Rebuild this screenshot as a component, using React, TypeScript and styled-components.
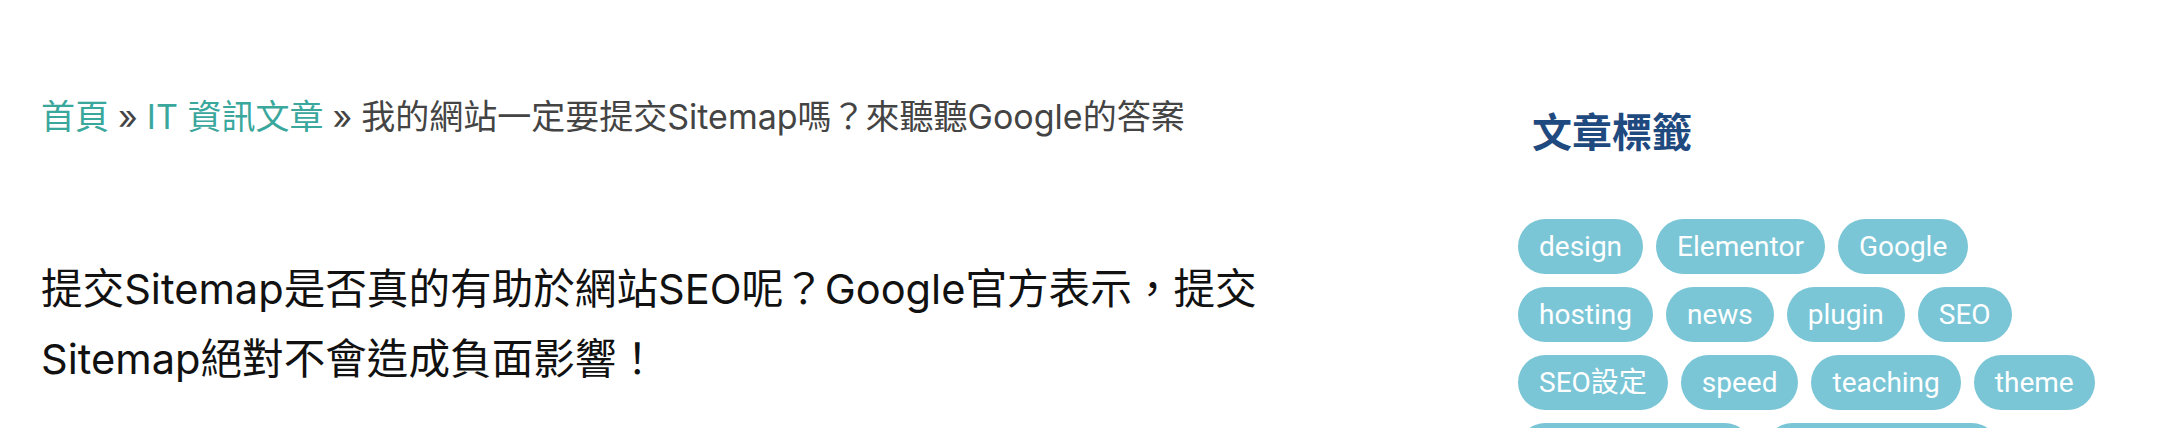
import styled, { createGlobalStyle } from 'styled-components'

const GlobalStyle = createGlobalStyle`
  html, body {
    margin: 0;
    padding: 0;
    background: #ffffff;
  }

  body {
    font-family: Inter, "Noto Sans CJK TC", sans-serif;
    overflow: hidden;
  }
`

const Page = styled.div`
  display: flex;
  align-items: flex-start;
  width: 2160px;
  height: 428px;
  overflow: hidden;
`

const Main = styled.main`
  box-sizing: border-box;
  flex: 0 0 1301px;
  padding: 93px 0 0 41px;
`

const Breadcrumb = styled.nav`
  color: #444444;
  font-size: 34px;
  line-height: 48px;
  white-space: nowrap;
`

const Crumb = styled.a`
  color: #3aa79d;
  text-decoration: none;
`

const Separator = styled.span`
  color: #444444;
  margin: 0 9px;
`

const Lead = styled.p`
  color: #111111;
  font-size: 41.6px;
  line-height: 70px;
  margin: 113px 0 0;
`

const Sidebar = styled.aside`
  box-sizing: border-box;
  flex: 0 0 596px;
  margin-left: 217px;
  padding-top: 109px;
`

const WidgetTitle = styled.h3`
  color: #1f4a80;
  font-size: 40px;
  font-weight: 700;
  line-height: 48px;
  margin: 0 0 62px;
  padding-left: 14px;
`

const TagCloud = styled.ul`
  display: flex;
  flex-wrap: wrap;
  gap: 13px;
  list-style: none;
  margin: 0;
  padding: 0;
`

const Tag = styled.li`
  background: #7ac6d7;
  border-radius: 28px;
  box-sizing: border-box;
  color: #ffffff;
  font-family: Roboto, "Noto Sans CJK TC", sans-serif;
  font-size: 28px;
  height: 55px;
  line-height: 55px;
  padding: 0 21px;
  white-space: nowrap;
`

const tags = [
  'design',
  'Elementor',
  'Google',
  'hosting',
  'news',
  'plugin',
  'SEO',
  'SEO設定',
  'speed',
  'teaching',
  'theme',
  'WordPress教學',
  'WordPress外掛',
]

export default function App() {
  return (
    <>
      <GlobalStyle />
      <Page>
        <Main>
          <Breadcrumb>
            <Crumb href="#">首頁</Crumb>
            <Separator>»</Separator>
            <Crumb href="#">IT 資訊文章</Crumb>
            <Separator>»</Separator>
            我的網站一定要提交Sitemap嗎？來聽聽Google的答案
          </Breadcrumb>
          <Lead>
            提交Sitemap是否真的有助於網站SEO呢？Google官方表示，提交Sitemap絕對不會造成負面影響！
          </Lead>
        </Main>
        <Sidebar>
          <WidgetTitle>文章標籤</WidgetTitle>
          <TagCloud>
            {tags.map((tag) => (
              <Tag key={tag}>{tag}</Tag>
            ))}
          </TagCloud>
        </Sidebar>
      </Page>
    </>
  )
}
